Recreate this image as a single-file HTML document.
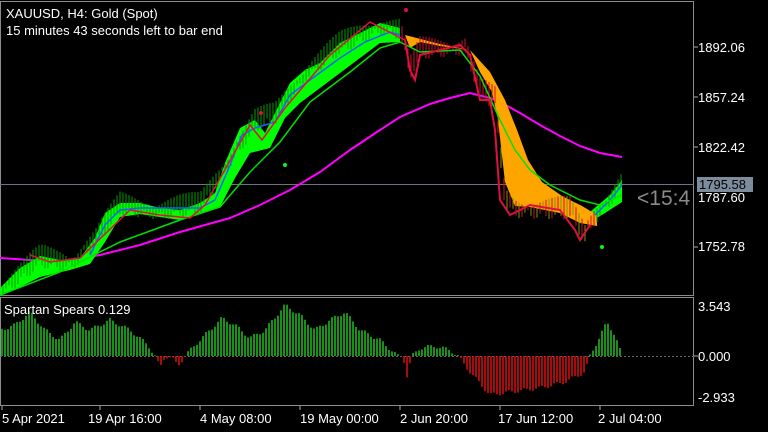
<!DOCTYPE html>
<html><head><meta charset="utf-8"><style>
html,body{margin:0;padding:0;background:#000;width:768px;height:432px;overflow:hidden;font-family:"Liberation Sans",Tahoma,sans-serif}
svg{position:absolute;left:0;top:0}
</style></head><body>
<svg id="s" width="768" height="432" xmlns="http://www.w3.org/2000/svg">
<rect width="768" height="432" fill="#000"/>
<rect x="0.5" y="1.5" width="693" height="294" fill="none" stroke="#8c8c8c"/>
<rect x="0.5" y="297.5" width="693" height="108" fill="none" stroke="#8c8c8c"/>
<line x1="0" y1="184.5" x2="694" y2="184.5" stroke="#6b7480"/>
<line x1="0" y1="356.5" x2="694" y2="356.5" stroke="#666" stroke-dasharray="2,2"/>
<g id="hist"></g>
<polyline fill="none" stroke="#ff00ff" stroke-width="2" points="0,258 30,260 60,262 100,255 140,245 180,232 230,218 260,205 290,190 320,172 350,150 380,130 400,117 430,104 450,98 470,93 490,98 500,102 520,113 540,125 560,136 580,146 600,153 622,157"/>
<polygon fill="#00ff00" points="0,288 20,268 40,256 60,260 80,258 95,238 105,213 120,203 140,203 160,208 180,210 200,203 215,193 225,163 240,128 255,120 265,133 275,113 290,83 305,70 320,63 340,43 360,33 380,23 400,28 400,42 380,43 360,58 340,73 320,88 300,103 285,118 270,148 250,153 235,178 220,207 200,214 180,220 160,217 140,214 120,217 105,242 90,264 70,270 40,277 20,287 0,296"/>
<polygon fill="#00ff00" points="590,212 610,195 622,180 622,202 605,213 592,221"/>
<polygon fill="#ffa500" points="405,35 440,44 470,50 490,72 505,100 517,130 528,160 542,182 562,196 582,206 597,215 597,226 580,223 560,213 530,207 515,206 505,182 498,120 492,92 480,72 470,50 440,46 420,42 410,48"/>
<g id="spikes"></g>
<polyline fill="none" stroke="#1e60ff" stroke-width="1.5" points="90,255 105,225 120,210 140,208 200,208 215,200 228,170 242,135 255,128 275,122 290,95 310,80 340,58 365,42 390,32 400,35"/>
<polyline fill="none" stroke="#1e60ff" stroke-width="1.5" points="595,215 610,200 622,185"/>
<polyline fill="none" stroke="#00e000" stroke-width="1.5" points="0,295 60,272 120,242 180,220 220,207 250,172 280,142 310,102 350,72 380,48 400,42 420,52 460,50 480,76 500,120 515,150 530,170 550,185 580,200 600,205 622,195"/>
<polyline fill="none" stroke="#e0103c" stroke-width="2" points="405,40 410,70 415,80 420,55 460,45 470,55 480,100 490,100 495,130 500,200 510,215 530,205 560,210 575,230 580,240 590,225"/>
<polyline fill="none" stroke="#e0103c" stroke-width="1.5" points="30,255 50,262 80,258 130,210 160,215 190,218 205,205 250,125 262,140 285,108 330,55 370,22 395,35 405,40"/>
<circle cx="406" cy="10" r="2" fill="#e0103c"/>
<circle cx="261" cy="113" r="2" fill="#e0103c"/>
<circle cx="285" cy="165" r="2" fill="#00ff00"/>
<circle cx="602" cy="247" r="2" fill="#00ff00"/>
<g stroke="#aaa">
<line x1="694" y1="47" x2="698" y2="47"/><line x1="694" y1="97" x2="698" y2="97"/><line x1="694" y1="147" x2="698" y2="147"/><line x1="694" y1="197" x2="698" y2="197"/><line x1="694" y1="247" x2="698" y2="247"/>
<line x1="694" y1="356" x2="698" y2="356"/>
<line x1="2" y1="406" x2="2" y2="410"/><line x1="100" y1="406" x2="100" y2="410"/><line x1="200" y1="406" x2="200" y2="410"/><line x1="300" y1="406" x2="300" y2="410"/><line x1="400" y1="406" x2="400" y2="410"/><line x1="500" y1="406" x2="500" y2="410"/><line x1="600" y1="406" x2="600" y2="410"/>
</g>
<g fill="#fff" font-family="Liberation Sans,Tahoma,sans-serif" font-size="13">
<text x="6" y="18">XAUUSD, H4:  Gold (Spot)</text>
<text x="6" y="35">15 minutes 43 seconds left to bar end</text>
<text x="4" y="314">Spartan Spears 0.129</text>
<text x="698" y="52">1892.06</text>
<text x="698" y="102">1857.24</text>
<text x="698" y="152">1822.42</text>
<text x="698" y="202">1787.60</text>
<text x="698" y="251">1752.78</text>
<text x="698" y="311">3.543</text>
<text x="698" y="361">0.000</text>
<text x="698" y="402">-2.933</text>
<text x="2" y="423">5 Apr 2021</text>
<text x="88" y="423">19 Apr 16:00</text>
<text x="200" y="423">4 May 08:00</text>
<text x="300" y="423">19 May 00:00</text>
<text x="400" y="423">2 Jun 20:00</text>
<text x="498" y="423">17 Jun 12:00</text>
<text x="598" y="423">2 Jul 04:00</text>
</g>
<rect x="697" y="177" width="56" height="15" fill="#7d8c9c"/>
<text x="699" y="189" font-size="13" fill="#000" font-family="Liberation Sans,sans-serif">1795.58</text>
<text x="637" y="205" font-size="21" fill="#8a8a8a" font-family="Liberation Sans,sans-serif">&lt;15:4</text>
<rect x="694" y="195" width="4" height="20" fill="#000"/>
</svg>
<script>
function interp(pts,x){for(var i=0;i<pts.length-1;i++){if(x>=pts[i][0]&&x<=pts[i+1][0]){var t=(x-pts[i][0])/(pts[i+1][0]-pts[i][0]);return pts[i][1]+t*(pts[i+1][1]-pts[i][1]);}}return pts[pts.length-1][1];}
var h=[[0,330],[15,325],[30,312],[45,330],[60,340],[75,322],[90,330],[110,320],[130,330],[148,345],[155,356],[160,368],[165,356],[172,358],[178,366],[185,356],[195,345],[210,330],[222,318],[235,325],[250,338],[265,330],[285,305],[300,315],[315,330],[330,320],[345,312],[360,330],[380,340],[398,356],[403,356],[407,376],[412,356],[420,348],[435,346],[450,350],[458,356],[470,372],[490,395],[510,392],[540,388],[565,382],[585,372],[590,356],[598,340],[607,322],[615,335],[622,356]];
var s="";
for(var x=2;x<=622;x+=3){var y=interp(h,x)+(Math.sin(x*1.7)*2);var c=y<356?"#1db81d":"#d01010";var y1=Math.min(y,356),y2=Math.max(y,356);s+='<line x1="'+x+'" y1="'+y1+'" x2="'+x+'" y2="'+y2+'" stroke="'+c+'" stroke-width="1.6"/>';}
document.getElementById("hist").innerHTML=s;
var p=[[0,290],[40,258],[70,262],[95,240],[120,205],[160,210],[200,205],[225,165],[255,122],[275,115],[305,72],[340,45],[380,25],[400,30],[410,70],[420,50],[465,45],[480,90],[495,100],[505,200],[515,208],[570,210],[585,235],[595,215],[622,182]];
var sp="";
for(var x=3;x<=622;x+=3){var y=interp(p,x);var up=(Math.abs(Math.sin(x*3.1))*14);var dn=(Math.abs(Math.cos(x*2.3))*10);var c=(x>400&&x<595)?"#d01030":"#00a000";if(x>500&&x<590&&x%2)c="#7a9a00";sp+='<line x1="'+x+'" y1="'+(y-up)+'" x2="'+x+'" y2="'+(y+dn)+'" stroke="'+c+'" stroke-width="1"/>';}
document.getElementById("spikes").innerHTML=sp;
</script>
</body></html>
